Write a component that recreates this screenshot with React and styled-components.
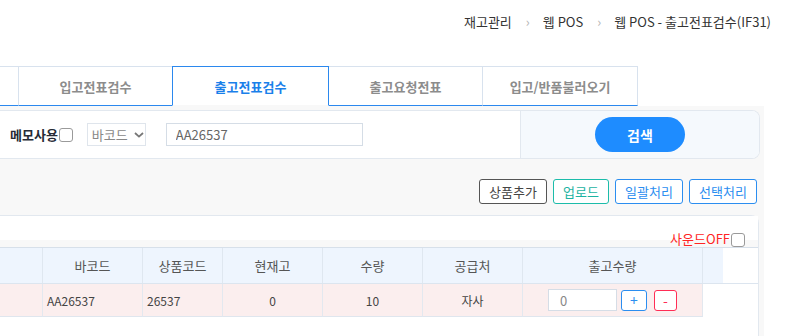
import React from "react";
import styled, { createGlobalStyle } from "styled-components";

const GlobalStyle = createGlobalStyle`
  html, body {
    margin: 0;
    padding: 0;
    background: #fff;
    overflow: hidden;
  }
  body {
    font-family: "Noto Sans CJK KR", "Noto Sans", sans-serif;
    color: #333;
  }
  * {
    box-sizing: border-box;
  }
  input, button {
    font-family: inherit;
  }
`;

const columns = "83px 100px 80px 100px 100px 100px 180px 20px";

function App() {
  return (
    <Page>
      <GlobalStyle />
      <Breadcrumb>
        <span>재고관리</span>
        <Sep>›</Sep>
        <span>웹 POS</span>
        <Sep>›</Sep>
        <span>웹 POS - 출고전표검수(IF31)</span>
      </Breadcrumb>
      <Shell>
        <Tabs>
          <Tab width={59} />
          <Tab width={155}>입고전표검수</Tab>
          <Tab width={157} active>
            출고전표검수
          </Tab>
          <Tab width={155}>출고요청전표</Tab>
          <Tab width={156}>입고/반품불러오기</Tab>
        </Tabs>
        <Content>
          <SearchCard>
            <SearchFields>
              <FieldLabel>메모사용</FieldLabel>
              <Check />
              <Select>
                바코드
                <Chevron viewBox="0 0 10 6">
                  <path d="M1 1l4 3.6L9 1" fill="none" stroke="#777" strokeWidth="1.8" />
                </Chevron>
              </Select>
              <SearchInput defaultValue="AA26537" />
            </SearchFields>
            <SearchAside>
              <SearchButton>검색</SearchButton>
            </SearchAside>
          </SearchCard>
          <ActionBar>
            <ActionButton tone="#555" text="#444" width={68}>
              상품추가
            </ActionButton>
            <ActionButton tone="#1cbcaa" text="#1cb3a2" width={56}>
              업로드
            </ActionButton>
            <ActionButton tone="#2b8ef0" text="#2b8ef0" width={68}>
              일괄처리
            </ActionButton>
            <ActionButton tone="#2b8ef0" text="#2b8ef0" width={68}>
              선택처리
            </ActionButton>
          </ActionBar>
          <TableCard>
            <SoundBar>
              <SoundLabel>사운드OFF</SoundLabel>
              <Check />
            </SoundBar>
            <Table>
              <HeadRow>
                <HeadCell />
                <HeadCell>바코드</HeadCell>
                <HeadCell>상품코드</HeadCell>
                <HeadCell>현재고</HeadCell>
                <HeadCell>수량</HeadCell>
                <HeadCell>공급처</HeadCell>
                <HeadCell>출고수량</HeadCell>
                <HeadCell gutter />
              </HeadRow>
              <BodyRow>
                <Cell />
                <Cell align="left">AA26537</Cell>
                <Cell align="left">26537</Cell>
                <Cell>0</Cell>
                <Cell>10</Cell>
                <Cell>자사</Cell>
                <Cell>
                  <QtyInput defaultValue="0" />
                  <StepButton color="#2b8ef0" width={26} gap={4}>
                    +
                  </StepButton>
                  <StepButton color="#ff2d55" width={23} gap={7}>
                    -
                  </StepButton>
                </Cell>
                <Gutter />
              </BodyRow>
            </Table>
          </TableCard>
        </Content>
      </Shell>
    </Page>
  );
}

export default App;

const Page = styled.div`
  width: 794px;
  height: 336px;
  overflow: hidden;
`;

const Breadcrumb = styled.nav`
  height: 66px;
  display: flex;
  justify-content: flex-end;
  align-items: flex-start;
  padding: 12px 23px 0 0;
  font-size: 13px;
  line-height: 20px;
  color: #333;
`;

const Sep = styled.span`
  color: #b5b5b5;
  padding: 0 13px 0 14px;
`;

const Shell = styled.div`
  margin-left: -40px;
  width: 804px;
`;

const Tabs = styled.div`
  display: flex;
  height: 40px;
`;

const Tab = styled.div`
  width: ${(p) => p.width}px;
  margin-left: -1px;
  display: flex;
  align-items: center;
  justify-content: center;
  background: #fff;
  border: 1px solid ${(p) => (p.active ? "#2b88ee" : "#d8e2ee")};
  border-bottom: 1px solid ${(p) => (p.active ? "#f8f8f8" : "#2b88ee")};
  position: relative;
  z-index: ${(p) => (p.active ? 1 : 0)};
  font-size: 13px;
  font-weight: 700;
  color: ${(p) => (p.active ? "#1a80ea" : "#8c8c8c")};
  &:first-child {
    margin-left: 0;
  }
`;

const Content = styled.div`
  background: #f8f8f8;
  height: 230px;
  padding: 4px 4px 0 0;
`;

const SearchCard = styled.div`
  display: flex;
  height: 49px;
  background: #fff;
  border: 1px solid #e2e8ef;
  border-left: none;
  border-radius: 0 8px 8px 0;
  overflow: hidden;
`;

const SearchFields = styled.div`
  flex: 1;
  display: flex;
  align-items: center;
  padding-left: 50px;
`;

const FieldLabel = styled.span`
  font-size: 13px;
  font-weight: 700;
  color: #262b36;
`;

const Check = styled.span`
  width: 14px;
  height: 14px;
  margin-left: 1px;
  border: 1px solid #9a9a9a;
  border-radius: 3px;
  background: #fff;
  flex-shrink: 0;
`;

const Select = styled.div`
  margin-left: 14px;
  width: 59px;
  height: 23px;
  border: 1px solid #dfe5ec;
  display: flex;
  align-items: center;
  padding-left: 4px;
  font-size: 13px;
  color: #888;
`;

const Chevron = styled.svg`
  width: 10px;
  height: 6px;
  margin-left: 6px;
`;

const SearchInput = styled.input`
  margin-left: 20px;
  width: 197px;
  height: 23px;
  border: 1px solid #d5dde6;
  padding: 0 0 0 9px;
  font-size: 13px;
  color: #666;
  outline: none;
`;

const SearchAside = styled.div`
  width: 239px;
  background: #f5f9fd;
  border-left: 1px solid #e2e8ef;
  display: flex;
  align-items: center;
  justify-content: center;
`;

const SearchButton = styled.button`
  width: 90px;
  height: 35px;
  border: none;
  border-radius: 18px;
  background: #1e8cff;
  color: #fff;
  font-size: 14px;
  font-weight: 700;
`;

const ActionBar = styled.div`
  display: flex;
  justify-content: flex-end;
  gap: 6px;
  margin-top: 20px;
  padding-right: 3px;
`;

const ActionButton = styled.button`
  width: ${(p) => p.width}px;
  height: 25px;
  padding: 0;
  border: 1px solid ${(p) => p.tone};
  border-radius: 3px;
  background: #fff;
  color: ${(p) => p.text};
  font-size: 13px;
`;

const TableCard = styled.div`
  margin: 11px 1px 0 0;
  height: 140px;
  background: #fff;
  border: 1px solid #e2e8ef;
  border-left: none;
  border-radius: 0 8px 0 0;
`;

const SoundBar = styled.div`
  height: 31px;
  display: flex;
  justify-content: flex-end;
  align-items: flex-start;
  padding: 17px 13px 0 0;
  background: linear-gradient(to bottom, #fff 24px, #f8f8f8 24px);
`;

const SoundLabel = styled.span`
  font-size: 13px;
  line-height: 11px;
  color: #ff2424;
`;

const Table = styled.div`
  border-top: 1px solid #d7e0ea;
`;

const HeadRow = styled.div`
  display: grid;
  grid-template-columns: ${columns};
  height: 36px;
  border-bottom: 1px solid #dce5ef;
`;

const HeadCell = styled.div`
  background: #eef5fe;
  border-right: ${(p) => (p.gutter ? "none" : "1px solid #dfe7f0")};
  display: flex;
  align-items: center;
  justify-content: center;
  font-size: 13px;
  color: #555;
`;

const BodyRow = styled.div`
  display: grid;
  grid-template-columns: ${columns};
  height: 33px;
`;

const Cell = styled.div`
  background: #fbeeee;
  border-right: 1px solid #e3e8ef;
  border-bottom: 1px solid #dfe6ee;
  display: flex;
  align-items: center;
  justify-content: ${(p) => (p.align === "left" ? "flex-start" : "center")};
  padding-left: ${(p) => (p.align === "left" ? "4px" : "0")};
  font-size: 12px;
  color: #444;
`;

const Gutter = styled.div``;

const QtyInput = styled.input`
  width: 69px;
  height: 22px;
  border: 1px solid #d5dde6;
  padding: 0 0 0 11px;
  font-size: 13px;
  color: #888;
  outline: none;
  background: #fff;
`;

const StepButton = styled.button`
  width: ${(p) => p.width}px;
  height: 21px;
  margin-left: ${(p) => p.gap}px;
  padding: 0;
  border: 1px solid ${(p) => p.color};
  border-radius: 3px;
  background: #fff;
  color: ${(p) => p.color};
  font-size: 14px;
  line-height: 1;
`;
